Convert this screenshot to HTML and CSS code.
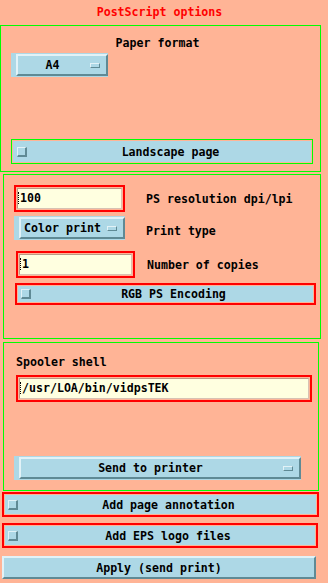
FILE: index.html
```html
<!DOCTYPE html>
<html>
<head>
<meta charset="utf-8">
<title>PostScript options</title>
<link rel="stylesheet" href="styles.css">
</head>
<body>
<div class="title">PostScript options</div>

<section class="frame f1">
  <div class="caption">Paper format</div>
  <div class="om om-a4"><div class="om-btn"><span class="om-label">A4</span><span class="cascade"></span></div></div>
  <div class="hl hl-green tg-landscape"><div class="tg-body pad4"><span class="check"></span><span class="tg-label">Landscape page</span></div></div>
</section>

<section class="frame f2">
  <div class="row r1">
    <div class="hl tf tf-res"><div class="tf-body"><span class="caret"></span><span>100</span></div></div>
    <div class="lbl">PS resolution dpi/lpi</div>
  </div>
  <div class="row r2">
    <div class="om om-color"><div class="om-btn"><span class="om-label">Color print</span><span class="cascade"></span></div></div>
    <div class="lbl lbl-type">Print type</div>
  </div>
  <div class="row r3">
    <div class="hl tf tf-copies"><div class="tf-body"><span class="caret"></span><span>1</span></div></div>
    <div class="lbl lbl-copies">Number of copies</div>
  </div>
  <div class="hl tg-rgb"><div class="tg-body"><span class="check"></span><span class="tg-label">RGB PS Encoding</span></div></div>
</section>

<section class="frame f3">
  <div class="caption-left">Spooler shell</div>
  <div class="hl tf tf-spool"><div class="tf-body"><span class="caret"></span><span>/usr/LOA/bin/vidpsTEK</span></div></div>
  <div class="om om-send"><div class="om-btn"><span class="om-label">Send to printer</span><span class="cascade"></span></div></div>
</section>

<div class="hl tg-annot"><div class="tg-body"><span class="check"></span><span class="tg-label">Add page annotation</span></div></div>
<div class="hl tg-eps"><div class="tg-body"><span class="check"></span><span class="tg-label">Add EPS logo files</span></div></div>
<div class="btn apply">Apply (send print)</div>
</body>
</html>
```
FILE: styles.css
```css
* { box-sizing: border-box; }
html, body { margin: 0; padding: 0; }
body {
  width: 328px;
  height: 583px;
  overflow: hidden;
  background: #ffb496;
  color: #000;
  font-family: "DejaVu Sans Mono", monospace;
  font-weight: bold;
  font-size: 11.6px;
  line-height: 14px;
}

.title {
  width: 319px;
  height: 25px;
  padding-top: 5px;
  text-align: center;
  color: #ff0000;
}

.frame { border: 1px solid #00ff00; }
.f1 { width: 321px; height: 147px; }
.f2 { width: 318px; height: 165px; margin: 2px 0 0 3px; }
.f3 { width: 316px; height: 149px; margin: 3px 0 0 3px; }

.caption { margin-top: 10px; padding-right: 6px; text-align: center; }
.caption-left { margin: 12px 0 0 12px; }

/* highlight ring (focus border of the widget) */
.hl { border: 2px solid #ff0000; padding: 1px; }
.hl-green { border-width: 1px; border-color: #00ff00; }

/* toggle buttons */
.tg-body {
  height: 100%;
  background: #add8e6;
  display: flex;
  align-items: center;
  padding-left: 3px;
}
.tg-body.pad4 { padding-left: 4px; }
.check {
  width: 10px;
  height: 10px;
  flex: none;
  background: #add8e6;
  border-style: solid;
  border-width: 1px 2px 2px 1px;
  border-color: #e2f2f7 #5f8a95 #5f8a95 #e2f2f7;
}
.tg-label { flex: 1; text-align: center; margin-left: 3px; }

/* option menus */
.om {
  height: 24px;
  background: #add8e6;
  padding: 1px 0 1px 5px;
  display: flex;
}
.om-btn {
  flex: 1;
  display: flex;
  align-items: center;
  border-style: solid;
  border-width: 2px;
  border-color: #e2f2f7 #5f8a95 #5f8a95 #e2f2f7;
}
.om-label { flex: 1; text-align: center; }
.cascade {
  flex: none;
  width: 10px;
  height: 5px;
  margin: 0 6px 0 3px;
  border-style: solid;
  border-width: 1px;
  border-color: #e2f2f7 #5f8a95 #5f8a95 #e2f2f7;
}

/* text fields */
.tf-body {
  height: 100%;
  background: #ffffe0;
  border-style: solid;
  border-width: 1px;
  border-color: #b99a86 #d8c2b3 #d8c2b3 #b99a86;
  display: flex;
  align-items: center;
  padding: 0 0 2px 0;
}
.caret {
  flex: none;
  width: 1px;
  height: 12px;
  margin-right: 1px;
  border-left: 1px dotted #000;
}

/* frame 1 */
.om-a4 { margin: 3px 0 0 10px; width: 97px; }
.tg-landscape { margin: 62px 0 0 10px; width: 302px; height: 25px; }

/* frame 2 */
.row {
  display: grid;
  grid-template-columns: 142px 1fr;
  align-items: center;
}
.r1 { margin-top: 10px; }
.r2 { margin-top: 4px; }
.r3 { margin-top: 11px; }
.tf-res { margin-left: 10px; width: 111px; height: 27px; }
.om-color { margin-left: 10px; width: 111px; }
.tf-copies { margin-left: 12px; width: 119px; height: 27px; }
.lbl-type { padding-top: 6px; }
.lbl-copies { padding-left: 1px; }
.tg-rgb { margin: 5px 0 0 11px; width: 301px; height: 22px; }

/* frame 3 */
.tf-spool { margin: 6px 0 0 12px; width: 296px; height: 27px; }
.om-send { margin: 54px 0 0 10px; width: 287px; }

/* bottom */
.tg-annot { margin: 1px 0 0 2px; width: 317px; height: 25px; }
.tg-eps { margin: 6px 0 0 2px; width: 316px; height: 25px; }
.btn {
  background: #add8e6;
  border-style: solid;
  border-width: 2px;
  border-color: #e2f2f7 #5f8a95 #5f8a95 #e2f2f7;
  display: flex;
  align-items: center;
  justify-content: center;
}
.apply { margin: 8px 0 0 2px; width: 314px; height: 23px; }
```
